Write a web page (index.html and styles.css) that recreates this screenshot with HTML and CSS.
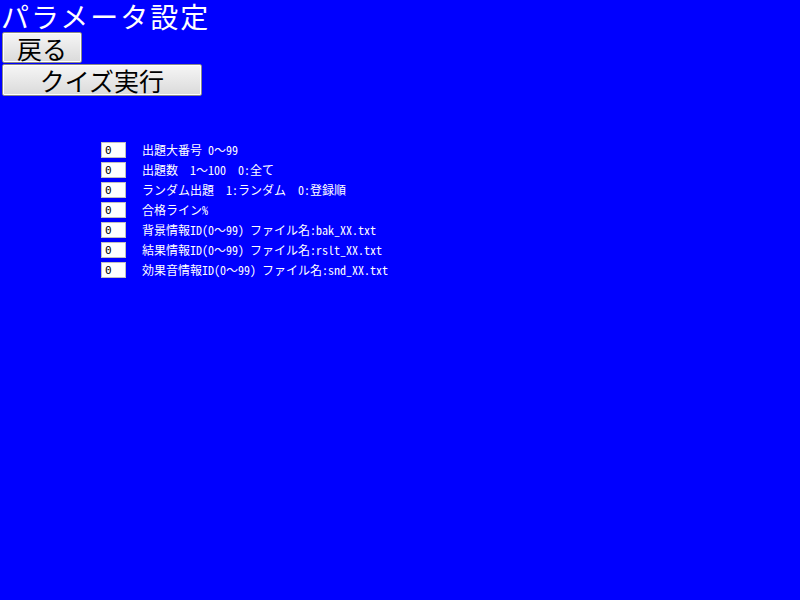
FILE: index.html
```html
<!DOCTYPE html>
<html lang="ja">
<head>
  <meta charset="UTF-8">
  <title>パラメータ設定</title>
  <link rel="stylesheet" href="styles.css">
</head>
<body>
  <h1 class="title">パラメータ設定</h1>
  <button type="button" class="btn btn-back">戻る</button>
  <button type="button" class="btn btn-run">クイズ実行</button>

  <form class="params">
    <div class="param-row">
      <input type="text" class="param-input" value="0">
      <span class="param-label">出題大番号 0～99</span>
    </div>
    <div class="param-row">
      <input type="text" class="param-input" value="0">
      <span class="param-label">出題数　1～100　0:全て</span>
    </div>
    <div class="param-row">
      <input type="text" class="param-input" value="0">
      <span class="param-label">ランダム出題　1:ランダム　0:登録順</span>
    </div>
    <div class="param-row">
      <input type="text" class="param-input" value="0">
      <span class="param-label">合格ライン%</span>
    </div>
    <div class="param-row">
      <input type="text" class="param-input" value="0">
      <span class="param-label">背景情報ID(0～99) ファイル名:bak_XX.txt</span>
    </div>
    <div class="param-row">
      <input type="text" class="param-input" value="0">
      <span class="param-label">結果情報ID(0～99) ファイル名:rslt_XX.txt</span>
    </div>
    <div class="param-row">
      <input type="text" class="param-input" value="0">
      <span class="param-label">効果音情報ID(0～99) ファイル名:snd_XX.txt</span>
    </div>
  </form>
</body>
</html>
```

FILE: styles.css
```css
body {
  margin: 0;
  background-color: #0000ff;
  font-family: "Noto Sans CJK JP", "DejaVu Sans", sans-serif;
  color: #fff;
  height: 600px;
}
.title {
  margin: 0;
  padding-left: 1px;
  font-size: 28px;
  font-weight: normal;
  letter-spacing: 2px;
  line-height: 32px;
}
.btn {
  display: block;
  margin-left: 2px;
  padding: 0;
  font-family: "Noto Sans CJK JP", sans-serif;
  font-size: 25px;
  line-height: 28px;
  color: #000;
  background: linear-gradient(#f6f6f6, #dadada);
  border: 1px solid #8a8a8a;
  border-radius: 2px;
  box-shadow: inset 0 0 0 1px #fff;
}
.btn-back {
  width: 80px;
  height: 31px;
  margin-bottom: 1px;
}
.btn-run {
  width: 200px;
  height: 32px;
}
.params {
  margin-top: 44px;
  padding-left: 101px;
}
.param-row {
  display: flex;
  align-items: center;
  height: 20px;
}
.param-input {
  box-sizing: border-box;
  width: 25px;
  height: 16px;
  margin: 0;
  padding: 0 0 0 3px;
  border: 1px solid #c0c0c0;
  background: #fff;
  color: #000;
  font-family: "DejaVu Sans Mono", monospace;
  font-size: 11px;
}
.param-label {
  margin-left: 16px;
  font-family: "Noto Sans Mono CJK JP", "Noto Sans CJK JP", monospace;
  font-size: 12px;
  line-height: 16px;
  white-space: pre;
}
```
